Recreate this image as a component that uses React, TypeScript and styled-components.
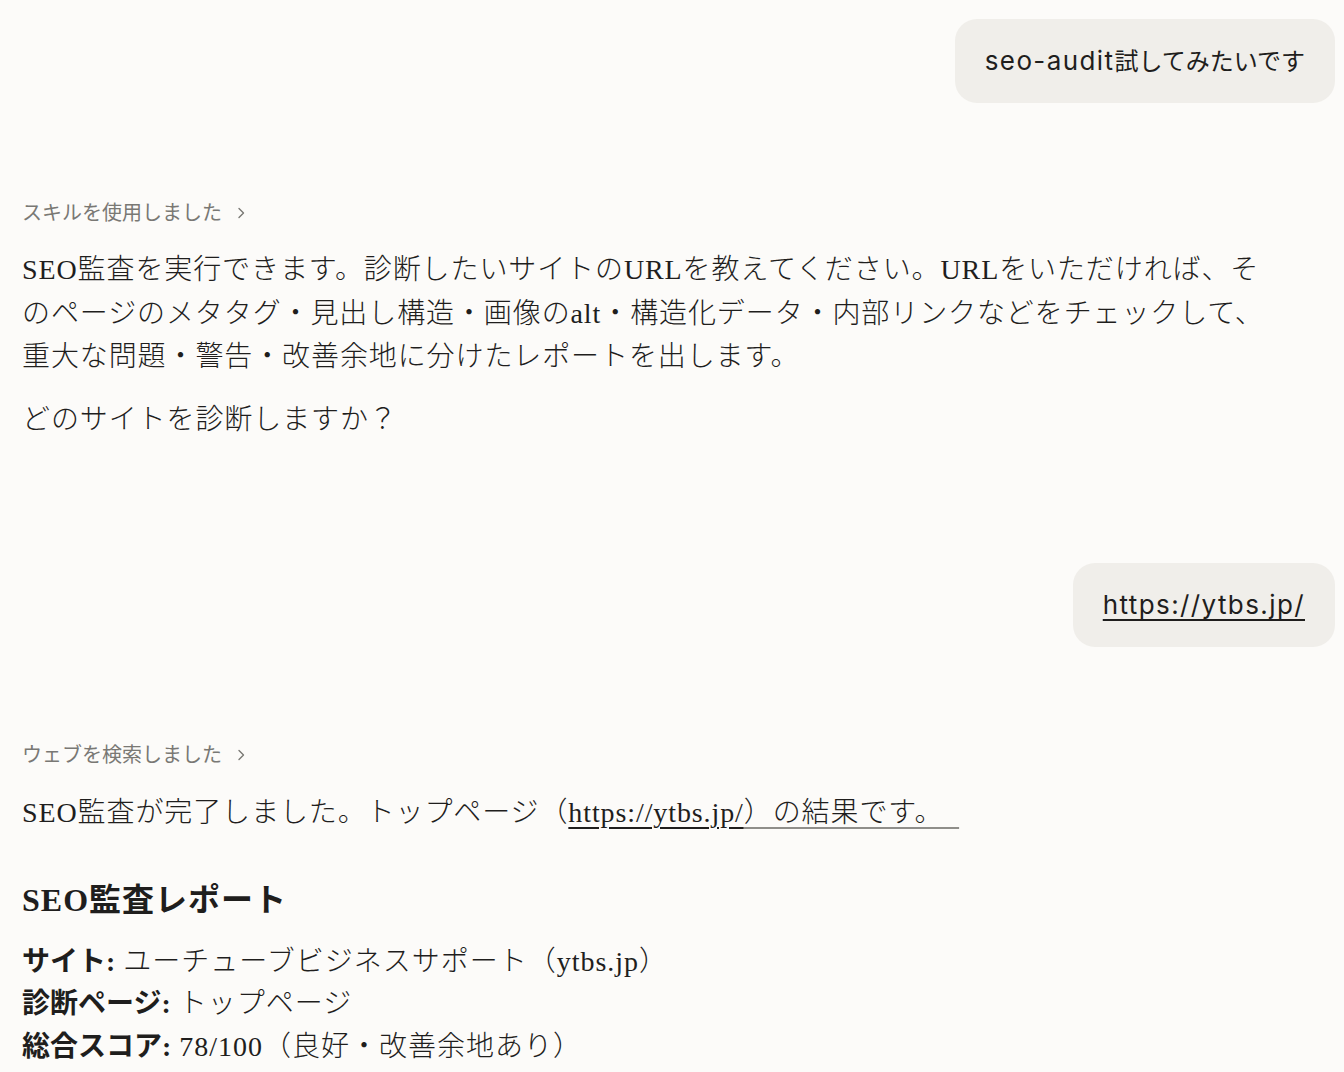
import React from "react";
import styled, { createGlobalStyle } from "styled-components";

const Global = createGlobalStyle`
  html, body { margin: 0; padding: 0; background: #fcfbf9; }
  body { -webkit-font-smoothing: antialiased; }
`;

const Page = styled.div`
  display: flex;
  flex-direction: column;
  padding: 19px 9px 0 22px;
  color: #1f1e1d;
  font-family: "Liberation Serif", "Noto Sans CJK JP", serif;
`;

const UserRow = styled.div<{ $mt?: number }>`
  display: flex;
  justify-content: flex-end;
  margin-top: ${(p) => p.$mt ?? 0}px;
`;

const Bubble = styled.div`
  background: #f0eeea;
  border-radius: 22px;
  padding: 22px 30px;
  font-family: "Inter", "Noto Sans CJK JP", sans-serif;
  font-size: 24px;
  line-height: 39px;
  color: #1f1e1d;
`;

const Latin = styled.span<{ $link?: boolean }>`
  font-size: 26px;
  letter-spacing: 1.4px;
  text-decoration: ${(p) => (p.$link ? "underline" : "none")};
  text-underline-offset: 5px;
  text-decoration-thickness: 2px;
`;

const ToolLabel = styled.div<{ $mt: number }>`
  margin-top: ${(p) => p.$mt}px;
  display: flex;
  align-items: center;
  gap: 12px;
  font-family: "Noto Sans CJK JP", sans-serif;
  font-size: 20px;
  line-height: 30px;
  color: #797874;
`;

const Chevron = styled.svg`
  width: 14px;
  height: 14px;
  margin-top: 2px;
`;

const Para = styled.p<{ $mt: number }>`
  margin: ${(p) => p.$mt}px 0 0;
  font-size: 28px;
  letter-spacing: 0.9px;
  line-height: 43.5px;
  font-weight: 300;
  max-width: 1252px;
`;

const Link = styled.a`
  color: inherit;
  text-decoration: underline;
  text-decoration-color: #1f1e1d;
  text-decoration-thickness: 1.5px;
  text-underline-offset: 5px;
`;

const Trail = styled.span`
  text-decoration: underline;
  text-decoration-color: #8f8e8a;
  text-decoration-thickness: 2px;
  text-underline-offset: 5px;
`;

const Heading = styled.h2`
  margin: 43px 0 0;
  font-size: 32px;
  letter-spacing: 1px;
  line-height: 44px;
  font-weight: 700;
`;

const InfoList = styled.div`
  margin-top: 19px;
  display: flex;
  flex-direction: column;
  font-size: 28px;
  letter-spacing: 1px;
  line-height: 42.5px;
  font-weight: 300;
`;

const InfoLine = styled.div``;

const Key = styled.strong`
  font-weight: 700;
  letter-spacing: 0;
`;

function ChevronRight() {
  return (
    <Chevron viewBox="0 0 14 14" fill="none" stroke="#797874" strokeWidth="1.4" strokeLinecap="round" strokeLinejoin="round">
      <path d="M5 2.5 L9.5 7 L5 11.5" />
    </Chevron>
  );
}

export default function App() {
  return (
    <>
      <Global />
      <Page>
        <UserRow>
          <Bubble>
            <Latin>seo-audit</Latin>試してみたいです
          </Bubble>
        </UserRow>

        <ToolLabel $mt={94}>
          スキルを使用しました
          <ChevronRight />
        </ToolLabel>

        <Para $mt={21}>
          SEO監査を実行できます。診断したいサイトのURLを教えてください。URLをいただければ、そのページのメタタグ・見出し構造・画像のalt・構造化データ・内部リンクなどをチェックして、重大な問題・警告・改善余地に分けたレポートを出します。
        </Para>
        <Para $mt={19}>どのサイトを診断しますか？</Para>

        <UserRow $mt={122}>
          <Bubble>
            <Latin $link>https://ytbs.jp/</Latin>
          </Bubble>
        </UserRow>

        <ToolLabel $mt={92}>
          ウェブを検索しました
          <ChevronRight />
        </ToolLabel>

        <Para $mt={22}>
          SEO監査が完了しました。トップページ（<Link href="#">https://ytbs.jp/</Link>
          <Trail>）の結果です。&nbsp;&nbsp;</Trail>
        </Para>

        <Heading>SEO監査レポート</Heading>

        <InfoList>
          <InfoLine>
            <Key>サイト:</Key> ユーチューブビジネスサポート（ytbs.jp）
          </InfoLine>
          <InfoLine>
            <Key>診断ページ:</Key> トップページ
          </InfoLine>
          <InfoLine>
            <Key>総合スコア:</Key> 78/100（良好・改善余地あり）
          </InfoLine>
        </InfoList>
      </Page>
    </>
  );
}
